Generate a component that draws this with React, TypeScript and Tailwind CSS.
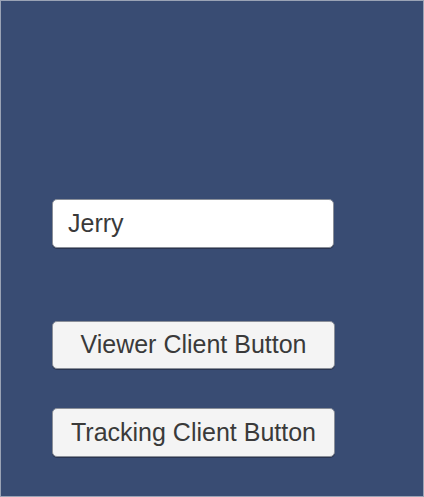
import React from "react";

export default function App() {
  return (
    <div className="w-[424px] h-[497px] bg-[#394c73] border border-[#9aa3b5] box-border flex flex-col pl-[51px] pt-[198px]" style={{ fontFamily: '"Liberation Sans", Arial, sans-serif' }}>
      <div className="w-[282px] h-[49px] bg-white rounded-[5px] border border-[#8a8f99] shadow-[0_1px_0_#2a3550] flex items-center pl-[15px] text-[25px] text-[#3a3a3a]">
        Jerry
      </div>
      <div className="mt-[73px] w-[283px] h-[48px] bg-[#f4f4f4] rounded-[5px] border border-[#8a8f99] shadow-[0_1px_0_#2a3550] flex items-center justify-center text-[25px] text-[#3a3a3a]">
        Viewer Client Button
      </div>
      <div className="mt-[39px] w-[283px] h-[49px] bg-[#f4f4f4] rounded-[5px] border border-[#8a8f99] shadow-[0_1px_0_#2a3550] flex items-center justify-center text-[25px] text-[#3a3a3a]">
        Tracking Client Button
      </div>
    </div>
  );
}
